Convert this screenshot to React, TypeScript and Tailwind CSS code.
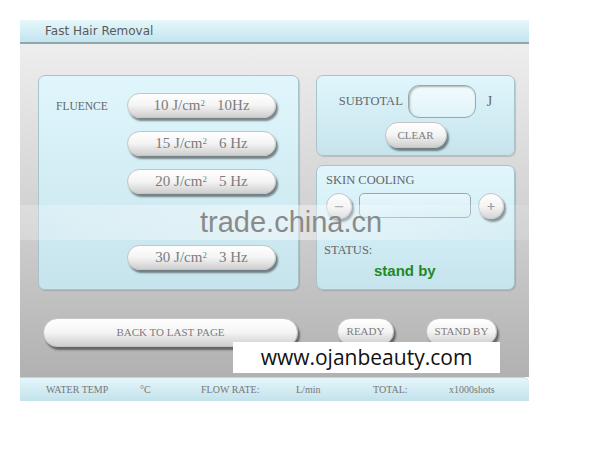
const serif = { fontFamily: '"Liberation Serif", "Times New Roman", serif' }

function Pill({
  children,
  className = '',
}: {
  children?: React.ReactNode
  className?: string
}) {
  return (
    <div
      className={`flex items-center justify-center rounded-full border border-[#c4c4c4] bg-gradient-to-b from-white via-[#f4f4f4] to-[#cfcfcf] text-[#7c7c7c] shadow-[2px_3px_2px_rgba(0,0,0,0.45)] ${className}`}
      style={serif}
    >
      {children}
    </div>
  )
}

function FluenceButton({ j, hz, hidden }: { j: string; hz: string; hidden?: boolean }) {
  if (hidden) return <div className="h-[25px]" />
  return (
    <Pill className="h-[25px] w-[149px] gap-3 text-[15px]">
      <span>
        {j} J/cm<sup className="text-[9px]">2</sup>
      </span>
      <span>{hz}Hz</span>
    </Pill>
  )
}

const card =
  'rounded-[7px] border border-[#a9c3cb] bg-gradient-to-b from-[#e0f6fc] to-[#c6e4ed] shadow-[1px_1px_1px_rgba(0,0,0,0.15)]'

export default function App() {
  return (
    <div className="relative h-[467px] w-[600px] overflow-hidden bg-white pl-5 pt-5">
      <div className="w-[509px]">
        {/* header */}
        <div
          className="flex h-[24px] items-center border-b-2 border-[#8fa7ad] bg-gradient-to-b from-[#e6f7fb] to-[#c2e5ef] pl-[25px] text-[12px] text-[#5a5a5a]"
          style={{ fontFamily: '"DejaVu Sans", Verdana, sans-serif' }}
        >
          Fast Hair Removal
        </div>

        {/* body */}
        <div className="h-[333px] bg-gradient-to-b from-[#eeeeee] via-[#d2d2d2] to-[#b1b1b1] pl-[18px] pr-[14px] pt-[31px]">
          <div className="flex gap-[17px]">
            <div className={`${card} flex h-[215px] w-[261px] shrink-0 pl-[17px] pt-[17px]`}>
              <div className="w-[71px] pt-[5px] text-[11.5px] text-[#666]" style={serif}>
                FLUENCE
              </div>
              <div className="flex flex-col gap-[13px]">
                <FluenceButton j="10" hz="10" />
                <FluenceButton j="15" hz="6 " />
                <FluenceButton j="20" hz="5 " />
                <FluenceButton j="25" hz="4 " hidden />
                <FluenceButton j="30" hz="3 " />
              </div>
            </div>

            <div className="flex w-[199px] shrink-0 flex-col gap-[9px]">
              <div className={`${card} flex h-[81px] flex-col items-center pt-[9px]`}>
                <div className="flex items-center text-[12.5px] text-[#666]" style={serif}>
                  <span className="mr-[5px]">SUBTOTAL</span>
                  <div className="h-[33px] w-[68px] rounded-[11px] border border-[#9aa] bg-gradient-to-b from-[#f2fbfd] to-[#dff3f9] shadow-[inset_1px_1px_2px_rgba(0,0,0,0.3)]" />
                  <span className="ml-[11px] text-[14px]">J</span>
                </div>
                <Pill className="mt-[4px] h-[26px] w-[62px] text-[11px]">CLEAR</Pill>
              </div>

              <div className={`${card} h-[125px] pl-[9px] pr-[10px] pt-[5px]`}>
                <div className="text-[12.5px] text-[#666]" style={serif}>
                  SKIN COOLING
                </div>
                <div className="mt-[3px] flex items-center gap-[7px]">
                  <Pill className="h-[26px] w-[26px] text-[16px] font-bold text-[#888]">–</Pill>
                  <div className="h-[25px] w-[113px] rounded-[5px] border border-[#95aab0] bg-gradient-to-b from-[#e8f7fb] to-[#d4eef5]" />
                  <Pill className="h-[26px] w-[26px] text-[15px] font-bold text-[#888]">+</Pill>
                </div>
                <div className="-ml-[2px] mt-[22px] text-[12.5px] text-[#666]" style={serif}>
                  STATUS:
                </div>
                <div
                  className="ml-[48px] text-[15px] font-bold text-[#1e8a26]"
                  style={{ fontFamily: '"Liberation Sans", Arial, sans-serif' }}
                >
                  stand by
                </div>
              </div>
            </div>
          </div>

          <div className="mt-[28px] flex items-start">
            <Pill className="ml-[5px] h-[29px] w-[255px] text-[11px]">BACK TO LAST PAGE</Pill>
            <Pill className="ml-[39px] h-[27px] w-[57px] text-[11px]">READY</Pill>
            <Pill className="ml-[32px] h-[27px] w-[71px] text-[11px]">STAND BY</Pill>
          </div>
        </div>

        {/* footer */}
        <div
          className="flex h-[24px] items-center rounded-tr-[6px] border-t border-[#b8d8e0] bg-gradient-to-b from-[#e4f6fb] to-[#c3e2eb] text-[10px] text-[#777]"
          style={serif}
        >
          <span className="ml-[26px] w-[94px]">WATER TEMP</span>
          <span className="w-[61px]">°C</span>
          <span className="w-[95px]">FLOW RATE:</span>
          <span className="w-[77px]">L/min</span>
          <span className="w-[76px]">TOTAL:</span>
          <span>x1000shots</span>
        </div>
      </div>

      {/* watermark band */}
      <div className="absolute left-0 top-[205px] flex h-[35px] w-[535px] items-center bg-gradient-to-r from-white/20 via-white/45 to-white/10">
        <span
          className="ml-[200px] text-[29px] leading-none text-[#8a8a8a]"
          style={{ fontFamily: '"Liberation Sans", Arial, sans-serif' }}
        >
          trade.china.cn
        </span>
      </div>

      {/* url overlay */}
      <div
        className="absolute left-[233px] top-[342px] flex h-[31px] w-[267px] items-center justify-center bg-white text-[21px] text-[#111]"
        style={{ fontFamily: '"Open Sans", "Segoe UI", sans-serif' }}
      >
        www.ojanbeauty.com
      </div>
    </div>
  )
}
